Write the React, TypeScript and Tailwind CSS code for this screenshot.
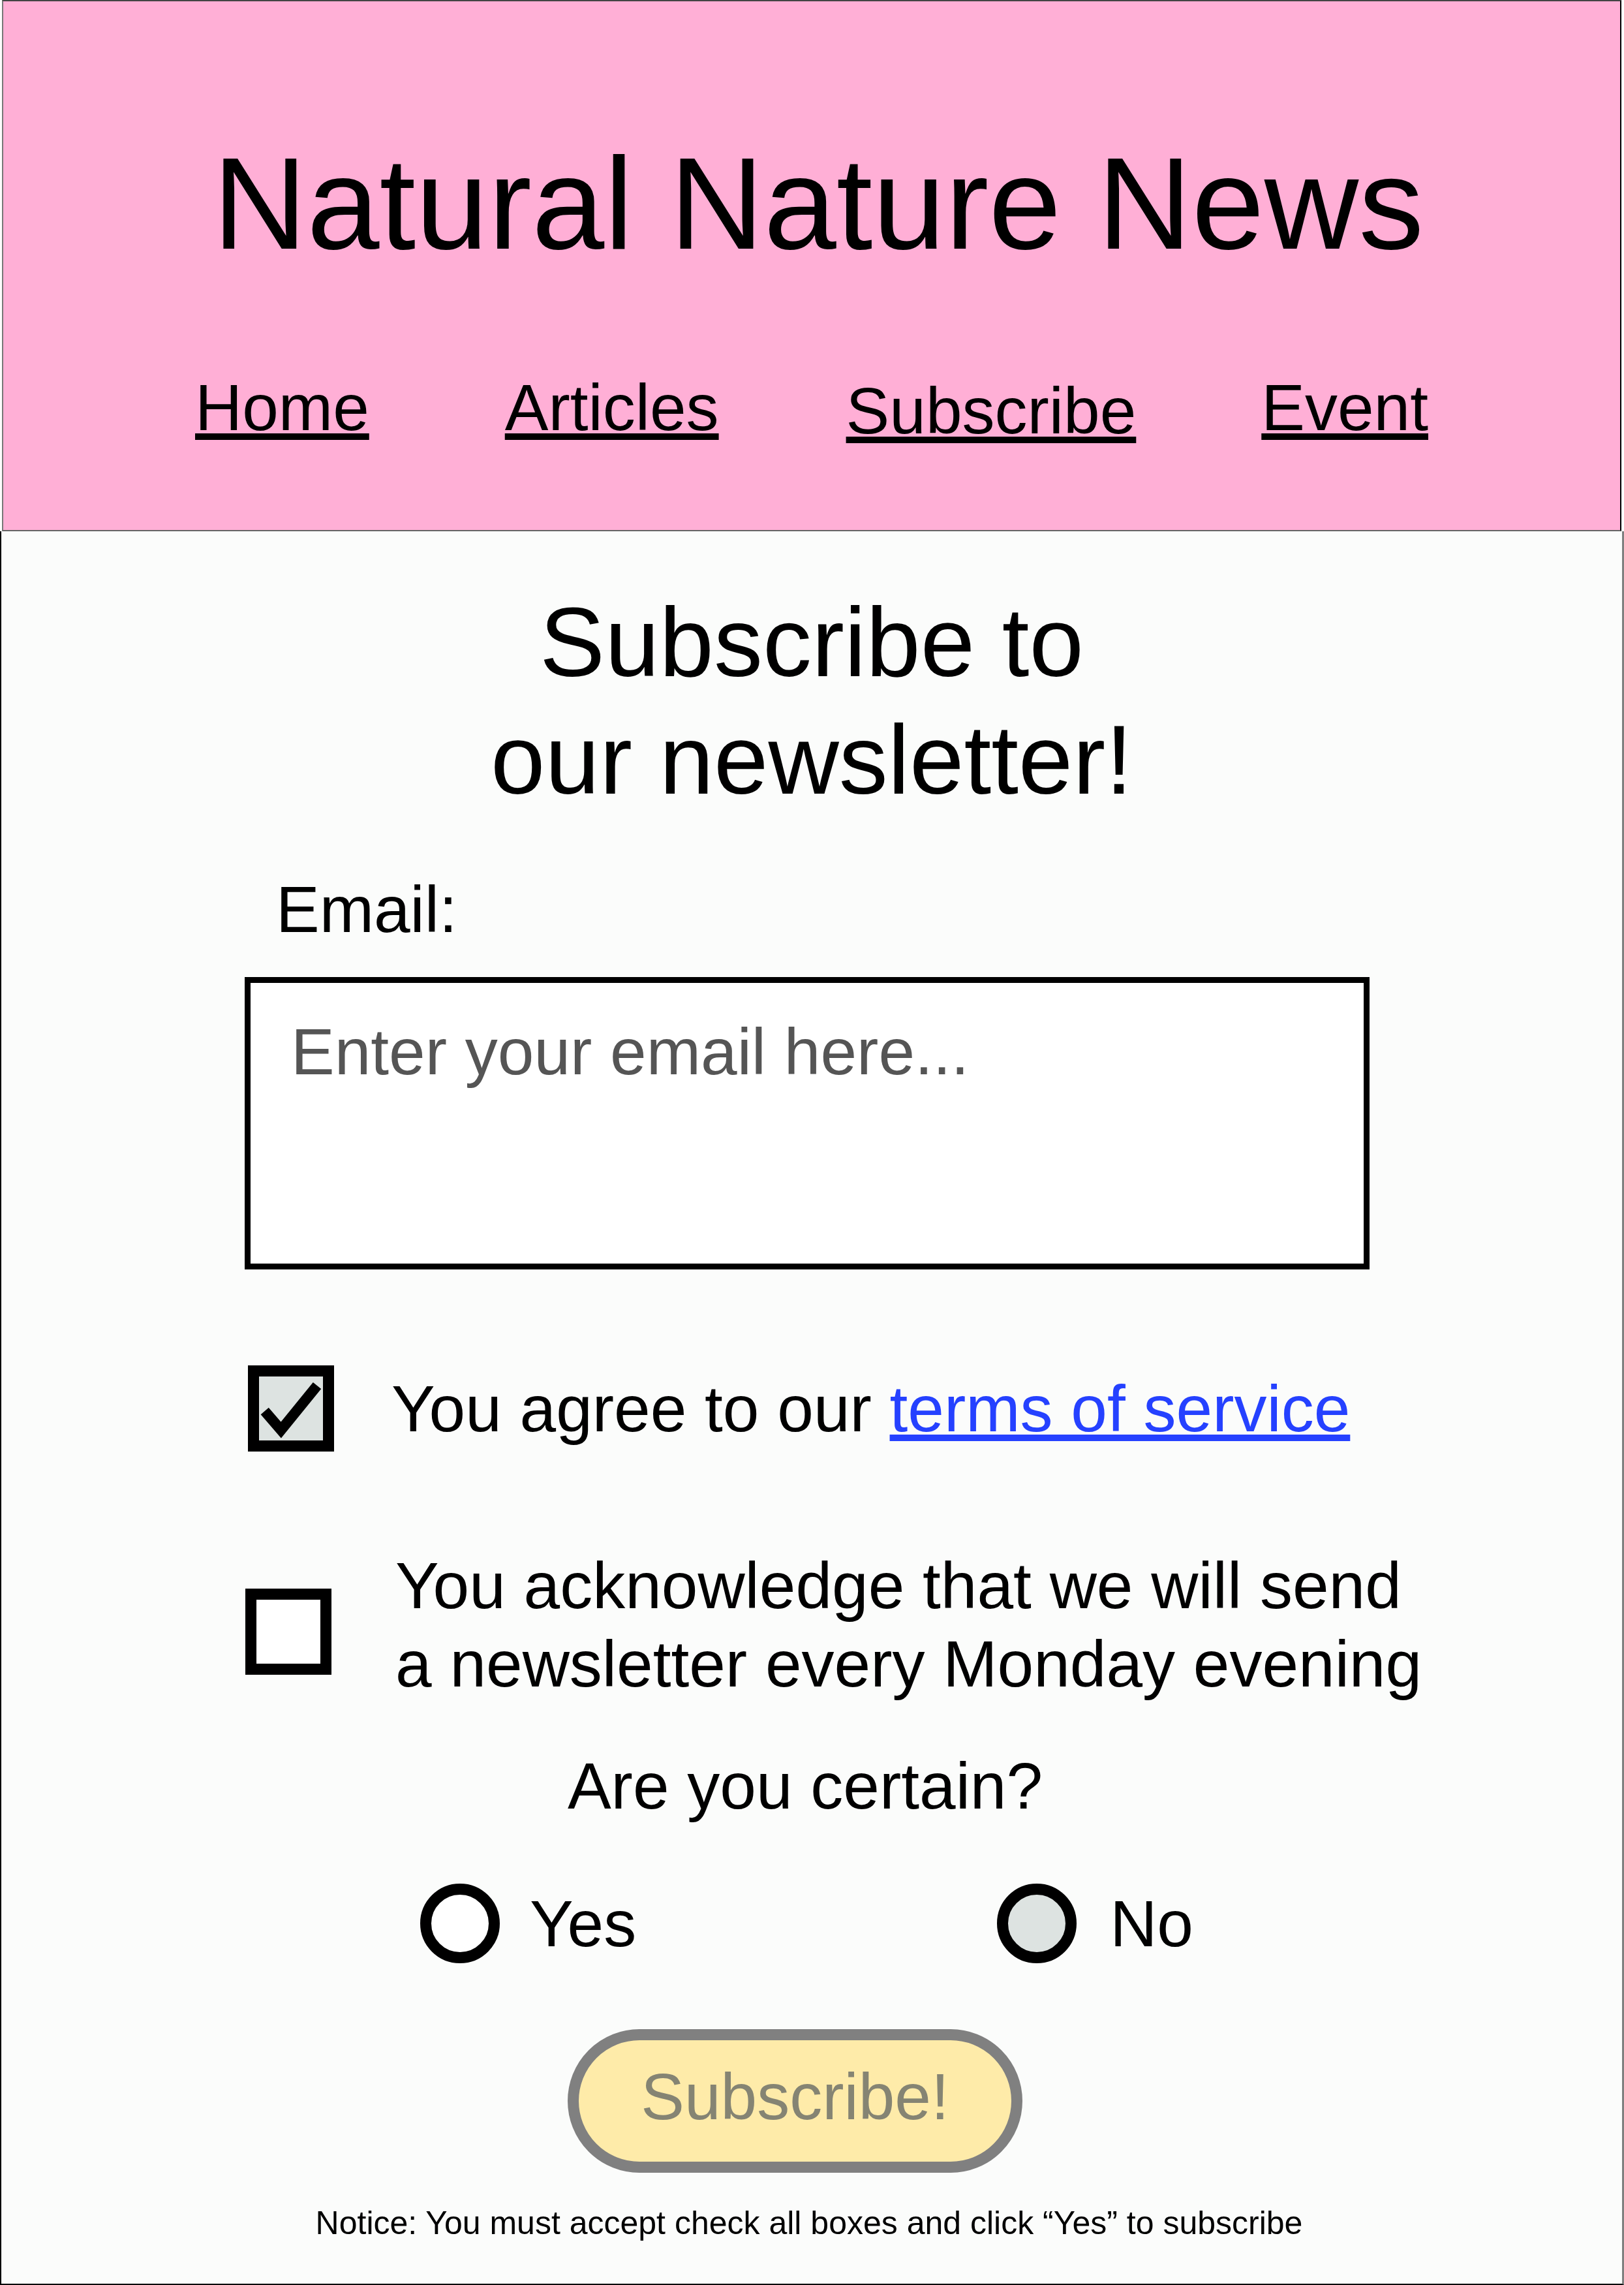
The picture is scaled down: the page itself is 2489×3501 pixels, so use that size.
import React from "react";

function CheckBox({ checked }: { checked: boolean }) {
  return (
    <svg width="132" height="132" viewBox="0 0 132 132" className="shrink-0">
      <rect x="8.5" y="8.5" width="115" height="115" fill={checked ? "#dde3e1" : "#ffffff"} stroke="#000" strokeWidth="17" />
      {checked && (
        <polyline points="25.7,70 50.7,99 106,31" fill="none" stroke="#000" strokeWidth="16" strokeLinejoin="miter" strokeLinecap="butt" />
      )}
    </svg>
  );
}

function Radio({ filled }: { filled: boolean }) {
  return (
    <svg width="122" height="122" viewBox="0 0 122 122" className="shrink-0">
      <circle cx="61" cy="61" r="52.5" fill={filled ? "#dde3e1" : "#ffffff"} stroke="#000" strokeWidth="17" />
    </svg>
  );
}

export default function App() {
  return (
    <div className="w-[2489px] h-[3501px] bg-white text-black font-['Liberation_Sans',Arial,sans-serif]">
      <header className="ml-[3px] w-[2482px] h-[814px] bg-[#ffafd6] border-t-2 border-t-[#444] border-l-2 border-l-[#777] border-r-2 border-r-black border-b-2 border-b-[#666] pt-[210px]">
        <h1 className="text-[200px] leading-[200px] text-center pl-[20px] font-normal">Natural Nature News</h1>
        <nav className="mt-[162px] flex items-start pl-[294px] text-[100px] leading-[100px]">
          <a className="underline">Home</a>
          <a className="underline ml-[208px]">Articles</a>
          <a className="underline ml-[195px] mt-[5px]">Subscribe</a>
          <a className="underline ml-[192px]">Event</a>
        </nav>
      </header>
      <main className="w-[2489px] h-[2687px] bg-[#fbfcfb] border-l-2 border-l-black border-r-[3px] border-r-[#808080] border-b-2 border-b-black pt-[80px]">
        <h2 className="text-[150px] leading-[180px] text-center font-normal">
          Subscribe to
          <br />
          our newsletter!
        </h2>
        <div className="ml-[373px]">
          <div className="mt-[82px] ml-[48px] text-[100px] leading-[115px]">Email:</div>
          <div className="mt-[46px] w-[1724px] h-[448px] border-[9px] border-black bg-white pl-[62px] pt-[48px] text-[#555555] text-[100px] leading-[115px]">
            Enter your email here...
          </div>
          <div className="mt-[147px] flex items-center">
            <div className="ml-[5px]">
              <CheckBox checked={true} />
            </div>
            <div className="ml-[88px] text-[100px] leading-[115px] whitespace-nowrap">
              You agree to our <a className="text-[#2541ff] underline">terms of service</a>
            </div>
          </div>
          <div className="mt-[145px] flex items-start">
            <div className="ml-[1px] mt-[65px]">
              <CheckBox checked={false} />
            </div>
            <div className="ml-[98px] text-[100px] leading-[120px] whitespace-nowrap">
              You acknowledge that we will send
              <br />a newsletter every Monday evening
            </div>
          </div>
        </div>
        <div className="mt-[70px] pr-[20px] text-center text-[100px] leading-[115px]">Are you certain?</div>
        <div className="mt-[92px] flex items-center pl-[642px] text-[100px] leading-[115px]">
          <Radio filled={false} />
          <span className="ml-[46px]">Yes</span>
          <div className="ml-[553px]">
            <Radio filled={true} />
          </div>
          <span className="ml-[51px]">No</span>
        </div>
        <button className="mt-[101px] ml-[868px] w-[697px] h-[220px] rounded-full border-[17px] border-[#808080] bg-[#feeba9] text-[#858473] text-[100px] leading-[115px] flex items-center justify-center pb-[13px]">
          Subscribe!
        </button>
        <div className="mt-[48px] pr-[8px] text-center text-[50px] leading-[58px]">
          Notice: You must accept check all boxes and click “Yes” to subscribe
        </div>
      </main>
    </div>
  );
}
